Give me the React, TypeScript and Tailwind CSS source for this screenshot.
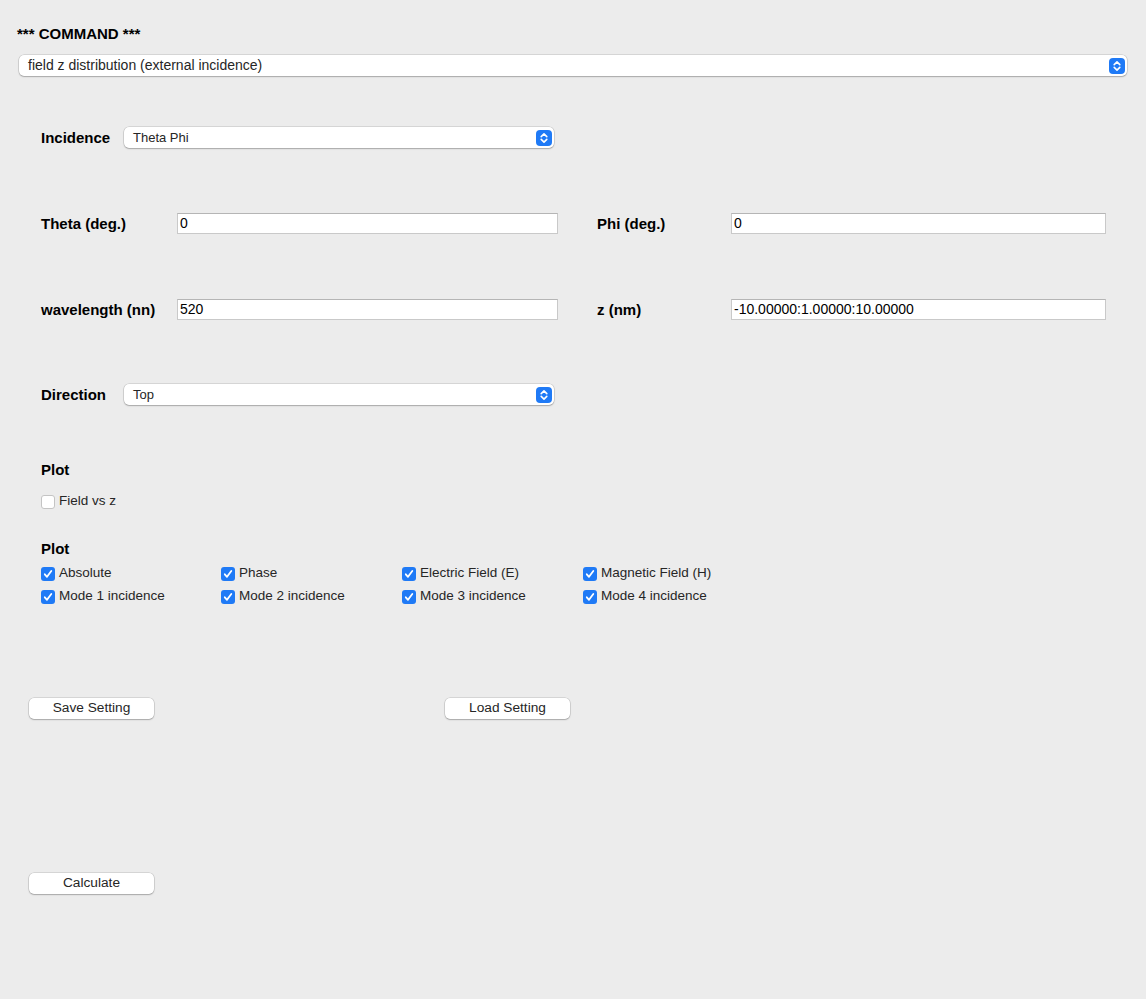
import React from 'react';

const font = { fontFamily: '"Liberation Sans", Arial, sans-serif' };

function Stepper() {
  return (
    <span className="flex h-[16px] w-[16px] items-center justify-center rounded-[4px] bg-[#1f7af6]">
      <svg width="10" height="12" viewBox="0 0 10 12" fill="none" stroke="white" strokeWidth="1.6" strokeLinecap="round" strokeLinejoin="round">
        <path d="M2.2 4.6 5 1.9l2.8 2.7" />
        <path d="M2.2 7.4 5 10.1l2.8-2.7" />
      </svg>
    </span>
  );
}

function Select({ value, className }: { value: string; className: string }) {
  return (
    <div
      className={`flex h-[21px] items-center justify-between rounded-[5px] bg-white pl-[9px] pr-[2px] text-[#262626] shadow-[0_0_0_0.5px_rgba(0,0,0,0.18),0_1px_1.5px_rgba(0,0,0,0.22)] ${className}`}
    >
      <span>{value}</span>
      <Stepper />
    </div>
  );
}

function TextInput({ value, className }: { value: string; className: string }) {
  return (
    <div
      className={`flex h-[21px] items-center border border-[#c9c9c9] border-t-[#b5b5b5] bg-white pl-[2px] text-[14px] text-black ${className}`}
    >
      {value}
    </div>
  );
}

function Check({ label, checked }: { label: string; checked: boolean }) {
  return (
    <div className="flex h-[23px] items-center gap-[4px] text-[13.5px] text-[#262626]">
      {checked ? (
        <span className="flex h-[14px] w-[14px] items-center justify-center rounded-[3px] bg-[#1f7af6]">
          <svg width="10" height="10" viewBox="0 0 10 10" fill="none" stroke="white" strokeWidth="1.8" strokeLinecap="round" strokeLinejoin="round">
            <path d="M1.8 5.3 4 7.8 8.3 2" />
          </svg>
        </span>
      ) : (
        <span className="h-[14px] w-[14px] rounded-[3px] border border-[#c4c4c4] bg-white" />
      )}
      <span>{label}</span>
    </div>
  );
}

function Button({ label }: { label: string }) {
  return (
    <div className="flex h-[21px] w-[125px] items-center justify-center rounded-[5px] bg-white text-[13.7px] text-[#262626] shadow-[0_0_0_0.5px_rgba(0,0,0,0.18),0_1px_1.5px_rgba(0,0,0,0.22)]">
      {label}
    </div>
  );
}

export default function App() {
  const plots = [
    'Absolute',
    'Phase',
    'Electric Field (E)',
    'Magnetic Field (H)',
    'Mode 1 incidence',
    'Mode 2 incidence',
    'Mode 3 incidence',
    'Mode 4 incidence',
  ];

  const label = 'text-[15px] font-bold leading-[21px] text-black';

  return (
    <div className="h-[999px] w-full overflow-hidden bg-[#ececec]" style={font}>
      <div className="pl-[17px] pt-[25px] text-[15px] font-bold leading-[18px] text-black">*** COMMAND ***</div>

      <div className="mt-[12px] px-[19px]">
        <Select value="field z distribution (external incidence)" className="w-full text-[14px]" />
      </div>

      <div className="pl-[41px]">
        {/* Incidence */}
        <div className="mt-[51px] flex items-center">
          <div className={`w-[83px] ${label}`}>Incidence</div>
          <Select value="Theta Phi" className="w-[430px] text-[13px]" />
        </div>

        {/* Theta / Phi */}
        <div className="mt-[65px] flex items-center">
          <div className={`w-[136px] ${label}`}>Theta (deg.)</div>
          <TextInput value="0" className="w-[381px]" />
          <div className={`ml-[39px] w-[134px] ${label}`}>Phi (deg.)</div>
          <TextInput value="0" className="w-[375px]" />
        </div>

        {/* wavelength / z */}
        <div className="mt-[65px] flex items-center">
          <div className={`w-[136px] ${label}`}>wavelength (nn)</div>
          <TextInput value="520" className="w-[381px]" />
          <div className={`ml-[39px] w-[134px] ${label}`}>z (nm)</div>
          <TextInput value="-10.00000:1.00000:10.00000" className="w-[375px]" />
        </div>

        {/* Direction */}
        <div className="mt-[64px] flex items-center">
          <div className={`w-[83px] ${label}`}>Direction</div>
          <Select value="Top" className="w-[430px] text-[13px]" />
        </div>

        {/* Plot 1 */}
        <div className="mt-[56px] text-[15px] font-bold leading-[18px] text-black">Plot</div>
        <div className="mt-[11px]">
          <Check label="Field vs z" checked={false} />
        </div>

        {/* Plot 2 */}
        <div className="mt-[27px] text-[15px] font-bold leading-[18px] text-black">Plot</div>
        <div className="mt-[4px] grid grid-cols-[180px_181px_181px_auto]">
          {plots.map(p => (
            <Check key={p} label={p} checked />
          ))}
        </div>
      </div>

      <div className="mt-[90px] flex pl-[29px]">
        <Button label="Save Setting" />
        <div className="ml-[291px]">
          <Button label="Load Setting" />
        </div>
      </div>

      <div className="mt-[154px] pl-[29px]">
        <Button label="Calculate" />
      </div>
    </div>
  );
}
